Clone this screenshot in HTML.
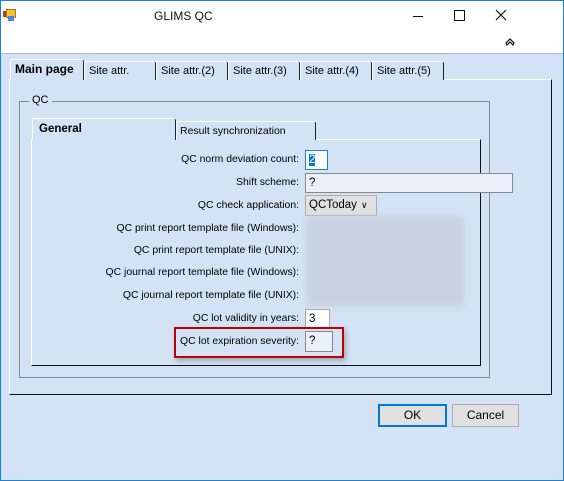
<!DOCTYPE html>
<html><head><style>
body{margin:0;width:564px;height:481px;overflow:hidden;font-family:"Liberation Sans",sans-serif;font-size:12px;}
.win{position:absolute;left:0;top:0;width:562px;height:479px;border:1px solid #1883d7;background:#d3e2f4;}
.title{position:absolute;left:0;top:0;width:562px;height:52px;background:#fff;border-bottom:1px solid #a9bcd3;}
.a{position:absolute;}
.tab{position:absolute;box-sizing:border-box;top:60px;height:19px;border:1px solid #fff;border-right:1px solid #222;border-bottom:none;border-radius:2px 3px 0 0;padding-left:4px;line-height:18px;font-size:11px;white-space:nowrap;background:#d3e2f4}
.lbl{position:absolute;right:264px;text-align:right;white-space:nowrap;font-size:10.4px;line-height:20px}
.inp{position:absolute;left:304px;background:#eaf1fb;border:1px solid #888;box-sizing:border-box;padding-left:3px;line-height:18px;font-size:11.5px;}
</style></head><body>
<div class="win">
<div class="title">
 <div class="a" style="left:2px;top:10px;width:5px;height:6px;background:#c0392b"></div>
 <div class="a" style="left:5px;top:8px;width:8px;height:7px;background:#f1c232;border:1px solid #b08000"></div>
 <div class="a" style="left:7px;top:15px;width:6px;height:5px;background:#4a86e8"></div>
 <div class="a" style="left:153px;top:8px;font-size:12px;color:#111">GLIMS QC</div>
 <div class="a" style="left:412px;top:15px;width:10px;height:1px;background:#111"></div>
 <div class="a" style="left:453px;top:9px;width:9px;height:9px;border:1px solid #111"></div>
 <svg class="a" style="left:494px;top:8px" width="12" height="12"><path d="M1 1L11 11M11 1L1 11" stroke="#111" stroke-width="1.2"/></svg>
 <svg class="a" style="left:504px;top:36px" width="10" height="9"><path d="M1 6L5 2L9 6L8 8L5 5L2 8Z" fill="none" stroke="#111" stroke-width="1.2"/></svg>
</div>
<div class="a" style="left:8px;top:78px;width:541px;height:314px;border:1px solid #fff;border-right:1px solid #111;border-bottom:1px solid #111;"></div>
<div class="tab" style="left:9px;width:74px;top:58px;height:21px;font-weight:bold;font-size:12px;z-index:2;line-height:19px">Main page</div>
<div class="tab" style="left:83px;width:72px">Site attr.</div>
<div class="tab" style="left:155px;width:72px">Site attr.(2)</div>
<div class="tab" style="left:227px;width:72px">Site attr.(3)</div>
<div class="tab" style="left:299px;width:72px">Site attr.(4)</div>
<div class="tab" style="left:371px;width:72px">Site attr.(5)</div>
<div class="a" style="left:18px;top:100px;width:469px;height:275px;border:1px solid #888"></div>
<div class="a" style="left:28px;top:93px;background:#d3e2f4;padding:0 3px;font-size:11px">QC</div>
<div class="a" style="left:30px;top:138px;width:448px;height:225px;border:1px solid #fff;border-right:1px solid #111;border-bottom:1px solid #111"></div>
<div class="tab" style="left:31px;top:117px;height:22px;width:144px;font-weight:bold;font-size:11.5px;z-index:2;padding-left:6px;line-height:20px">General</div>
<div class="tab" style="left:175px;top:120px;width:140px;padding-left:3px;font-size:10.5px">Result synchronization</div>

<div class="lbl" style="top:149px">QC norm deviation count:</div>
<div class="inp" style="top:149px;width:23px;height:20px;border:1px solid #1883d7;background:#fff"><span style="background:#0078d7;color:#fff">2</span></div>
<div class="lbl" style="top:172px">Shift scheme:</div>
<div class="inp" style="top:172px;width:208px;height:20px">?</div>
<div class="lbl" style="top:195px">QC check application:</div>
<div class="inp" style="top:194px;width:72px;height:21px;background:#e1e1e1;border-color:#adadad;line-height:19px">QCToday <span style="position:absolute;left:55px;font-size:9px">&#8744;</span></div>
<div class="a" style="left:306px;top:215px;width:157px;height:90px;background:#c8d2de;filter:blur(3px)"></div>
<div class="lbl" style="top:218px">QC print report template file (Windows):</div>
<div class="lbl" style="top:240px">QC print report template file (UNIX):</div>
<div class="lbl" style="top:262px">QC journal report template file (Windows):</div>
<div class="lbl" style="top:285px">QC journal report template file (UNIX):</div>
<div class="lbl" style="top:308px">QC lot validity in years:</div>
<div class="inp" style="top:308px;width:25px;height:20px;border-color:#aaa;background:#fff">3</div>
<div class="a" style="left:173px;top:326px;width:166px;height:27px;border:2px solid #c00000;box-shadow:2px 3px 5px rgba(0,0,0,.25)"></div>
<div class="lbl" style="top:331px">QC lot expiration severity:</div>
<div class="inp" style="top:330px;width:28px;height:21px;border-color:#888">?</div>

<div class="a" style="left:377px;top:403px;width:65px;height:19px;border:2px solid #0078d7;background:#e1e1e1;text-align:center;line-height:19px">OK</div>
<div class="a" style="left:451px;top:403px;width:65px;height:21px;border:1px solid #adadad;background:#e1e1e1;text-align:center;line-height:21px">Cancel</div>
</div>
</body></html>
